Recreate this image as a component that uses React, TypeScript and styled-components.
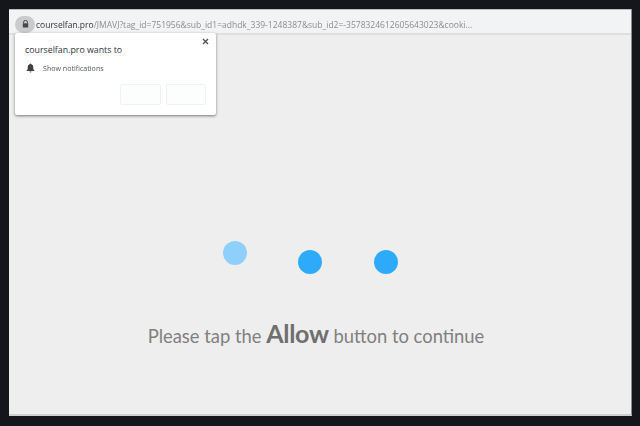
import React from 'react'
import styled, { createGlobalStyle } from 'styled-components'

const GlobalStyle = createGlobalStyle`
  html, body {
    margin: 0;
    padding: 0;
    height: 100%;
    background: #14161b;
    font-family: "Open Sans", "Liberation Sans", sans-serif;
  }
`

const Screen = styled.div`
  width: 640px;
  height: 426px;
  box-sizing: border-box;
  padding: 9px 8px 10px 9px;
  background: #14161b;
  overflow: hidden;
`

const Browser = styled.div`
  position: relative;
  height: 100%;
  display: flex;
  flex-direction: column;
  background: #eeeeee;
  border-bottom: 2px solid #d0d0d0;
  border-right: 1px solid #8a8c90;
  box-sizing: border-box;
`

const Toolbar = styled.div`
  height: 26px;
  box-sizing: border-box;
  flex-shrink: 0;
  display: flex;
  align-items: center;
  gap: 1px;
  padding: 5px 0 0 6px;
  background: #f1f3f4;
  border-top: 1px solid #b9bbbd;
  border-bottom: 2px solid #dfdfdf;
`

const LockChip = styled.div`
  width: 20px;
  height: 17px;
  border-radius: 9px;
  background: #c9cbcc;
  display: flex;
  align-items: center;
  justify-content: center;
`

const Url = styled.div`
  font-size: 8.5px;
  white-space: nowrap;
  color: #8b8f93;
  filter: blur(0.25px);
`

const Host = styled.span`
  color: #33373b;
`

const Popup = styled.div`
  position: absolute;
  left: 6px;
  top: 24px;
  width: 201px;
  height: 82px;
  box-sizing: border-box;
  padding: 11px 10px 0;
  background: #fff;
  border-radius: 2px;
  box-shadow: 0 1px 3px rgba(0, 0, 0, 0.5);
  display: flex;
  flex-direction: column;
`

const CloseIcon = styled.svg`
  position: absolute;
  right: 7px;
  top: 5px;
`

const PopupTitle = styled.div`
  font-size: 8.8px;
  line-height: 12px;
  color: #30343a;
`

const PermissionRow = styled.div`
  display: flex;
  align-items: center;
  gap: 8px;
  margin-top: 7px;
  padding-left: 1px;
  font-size: 7.1px;
  color: #55595d;
  filter: blur(0.2px);
`

const ButtonRow = styled.div`
  display: flex;
  justify-content: flex-end;
  gap: 5px;
  margin-top: 11px;
`

const GhostButton = styled.div<{ $width: number }>`
  width: ${({ $width }) => $width}px;
  height: 19px;
  background: #fcfdfd;
  border: 1px solid #f1f2f3;
  border-radius: 2px;
`

const Content = styled.main`
  flex: 1;
  display: flex;
  flex-direction: column;
  align-items: center;
  padding-top: 206px;
`

const Dots = styled.div`
  display: flex;
  gap: 51.5px;
  height: 33px;
  margin-right: 20px;
`

const Dot = styled.div<{ $lifted?: boolean }>`
  width: 24px;
  height: 24px;
  border-radius: 50%;
  margin-top: ${({ $lifted }) => ($lifted ? 0 : 9)}px;
  background: ${({ $lifted }) => ($lifted ? '#8fcffb' : '#2eaafa')};
`

const Message = styled.p`
  margin: 42px 8px 0 0;
  font-family: "Lato", "Open Sans", sans-serif;
  font-size: 18.4px;
  line-height: 34px;
  color: #808080;
  white-space: nowrap;
`

const Strong = styled.strong`
  font-size: 25px;
  font-weight: 700;
  letter-spacing: -0.3px;
  color: #6f6f6f;
`

export default function App() {
  return (
    <>
      <GlobalStyle />
      <Screen>
        <Browser>
          <Toolbar>
            <LockChip>
              <svg width="7" height="8" viewBox="0 0 7 8">
                <path d="M1.5 3.5V2.4a2 2 0 0 1 4 0v1.1" fill="none" stroke="#45494d" strokeWidth="1" />
                <rect x="0.8" y="3.3" width="5.4" height="4.2" rx="0.5" fill="#45494d" />
              </svg>
            </LockChip>
            <Url>
              <Host>courselfan.pro</Host>/JMAVJ?tag_id=751956&amp;sub_id1=adhdk_339-1248387&amp;sub_id2=-3578324612605643023&amp;cooki...
            </Url>
          </Toolbar>
          <Popup>
            <CloseIcon width="7" height="7" viewBox="0 0 7 7">
              <path d="M1 1l5 5M6 1L1 6" stroke="#4b4f53" strokeWidth="1.3" />
            </CloseIcon>
            <PopupTitle>courselfan.pro wants to</PopupTitle>
            <PermissionRow>
              <svg width="9" height="10" viewBox="0 0 9 10">
                <path d="M4.5 0.5c.5 0 .8.3.8.8 1.4.4 2 1.5 2 2.9v2l1.1 1.2v.5H.6v-.5l1.1-1.2v-2c0-1.4.6-2.5 2-2.9 0-.5.3-.8.8-.8zM3.5 8.6h2a1 1 0 0 1-2 0z" fill="#3d4145" />
              </svg>
              Show notifications
            </PermissionRow>
            <ButtonRow>
              <GhostButton $width={39} />
              <GhostButton $width={38} />
            </ButtonRow>
          </Popup>
          <Content>
            <Dots>
              <Dot $lifted />
              <Dot />
              <Dot />
            </Dots>
            <Message>
              Please tap the <Strong>Allow</Strong> button to continue
            </Message>
          </Content>
        </Browser>
      </Screen>
    </>
  )
}
